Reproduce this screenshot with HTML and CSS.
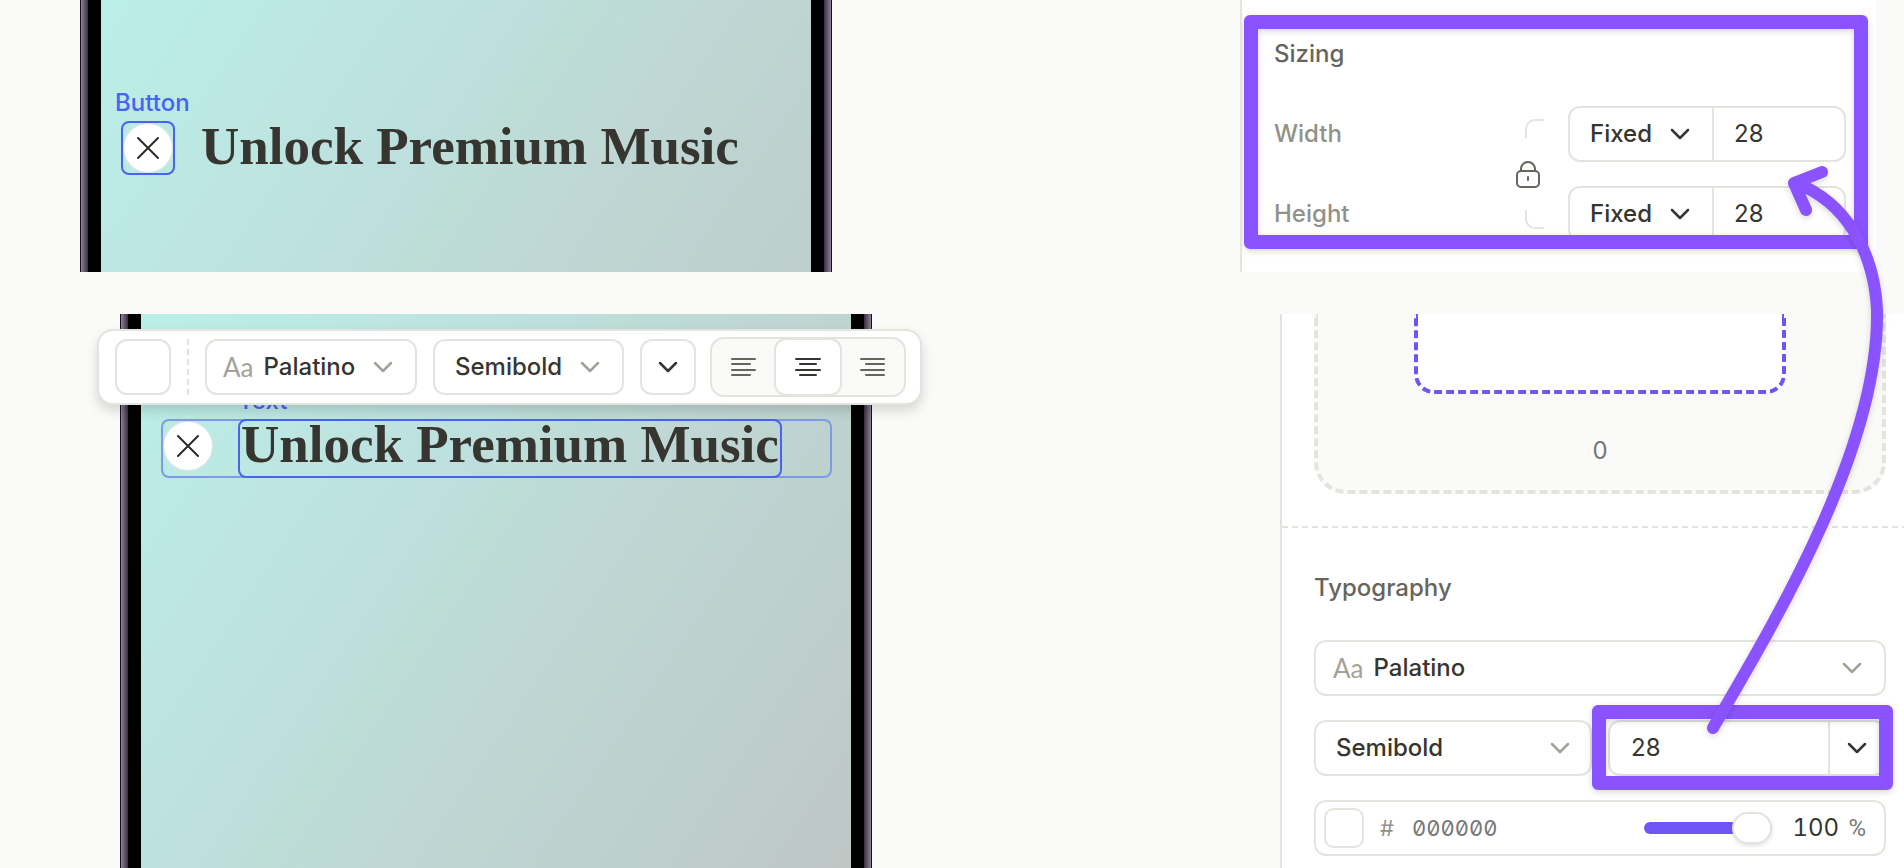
FILE: index.html
```html
<!DOCTYPE html>
<html lang="en">
<head>
<meta charset="utf-8">
<meta name="viewport" content="width=device-width, initial-scale=1">
<title>Matching button size to text size</title>
<link rel="stylesheet" href="styles.css">
</head>
<body>
<svg class="symbols" aria-hidden="true">
  <symbol id="chevron" viewBox="0 0 20 12"><path d="M2 2l8 8 8-8"/></symbol>
  <symbol id="cross" viewBox="0 0 24 24"><path d="M2 2l20 20M22 2L2 22"/></symbol>
</svg>
<main class="page">
  <section class="shot shot-top">
    <div class="phone">
      <div class="screen">
        <div class="title-row">
          <div class="selected-button">
            <span class="tag tag-button">Button</span>
            <button class="close" type="button" aria-label="Close"><svg class="cross"><use href="#cross"/></svg></button>
          </div>
          <h2 class="title">Unlock Premium Music</h2>
        </div>
      </div>
    </div>
    <aside class="panel panel-sizing">
      <h3 class="panel-title">Sizing</h3>
      <div class="sizing">
        <label class="name" for="width">Width</label>
        <button class="lock" type="button" aria-label="Lock proportions">
          <svg width="28" height="136" viewBox="0 0 28 136">
            <path class="bracket" d="M28 14h-9a9 9 0 0 0-9 9v9M10 104v9a9 9 0 0 0 9 9h9"/>
            <rect x="1" y="65" width="22" height="16" rx="4"/>
            <path d="M5 65v-2a7 7 0 0 1 14 0v2M12 71v3"/>
          </svg>
        </button>
        <div class="field split">
          <select class="mode" aria-label="Width mode"><option>Fixed</option></select>
          <svg class="chevron dark"><use href="#chevron"/></svg>
          <input class="size" id="width" type="text" value="28">
        </div>
        <label class="name" for="height">Height</label>
        <div class="field split">
          <select class="mode" aria-label="Height mode"><option>Fixed</option></select>
          <svg class="chevron dark"><use href="#chevron"/></svg>
          <input class="size" id="height" type="text" value="28">
        </div>
      </div>
      <div class="frame frame-sizing"></div>
    </aside>
  </section>

  <section class="shot shot-bottom">
    <div class="phone">
      <div class="screen">
        <div class="title-row outlined">
          <button class="close" type="button" aria-label="Close"><svg class="cross"><use href="#cross"/></svg></button>
          <div class="selected-text">
            <span class="tag tag-text">Text</span>
            <h2 class="title">Unlock Premium Music</h2>
          </div>
        </div>
      </div>
      <div class="toolbar" role="toolbar" aria-label="Text formatting">
        <button class="swatch-large" type="button" aria-label="Text color"></button>
        <span class="rule"></span>
        <div class="field tool-font">
          <span class="aa" aria-hidden="true">Aa</span>
          <select aria-label="Font"><option>Palatino</option></select>
          <svg class="chevron"><use href="#chevron"/></svg>
        </div>
        <div class="field tool-weight">
          <select aria-label="Weight"><option>Semibold</option></select>
          <svg class="chevron"><use href="#chevron"/></svg>
        </div>
        <button class="more" type="button" aria-label="More"><svg class="chevron dark"><use href="#chevron"/></svg></button>
        <div class="aligns" role="group" aria-label="Alignment">
          <button type="button" aria-label="Align left"><svg class="lines" viewBox="0 0 28 22"><path d="M3 3h23M3 8h18M3 14h23M3 19h18"/></svg></button>
          <button class="on" type="button" aria-label="Align center" aria-pressed="true"><svg class="lines" viewBox="0 0 28 22"><path d="M2 3h24M6 8h16M2 14h24M6 19h16"/></svg></button>
          <button type="button" aria-label="Align right"><svg class="lines" viewBox="0 0 28 22"><path d="M2 3h23M7 8h18M2 14h23M7 19h18"/></svg></button>
        </div>
      </div>
    </div>
    <aside class="panel panel-type">
      <div class="spacing">
        <div class="spacing-inner"></div>
        <span class="spacing-value">0</span>
      </div>
      <div class="divider"></div>
      <h3 class="panel-title">Typography</h3>
      <div class="fields">
        <div class="field field-font">
          <span class="aa" aria-hidden="true">Aa</span>
          <select aria-label="Font family"><option>Palatino</option></select>
          <svg class="chevron"><use href="#chevron"/></svg>
        </div>
        <div class="pair">
          <div class="field field-weight">
            <select aria-label="Font weight"><option>Semibold</option></select>
            <svg class="chevron"><use href="#chevron"/></svg>
          </div>
          <div class="combo">
            <div class="field">
              <input class="font-size" type="text" value="28" aria-label="Font size">
              <button class="open" type="button" aria-label="Choose font size"><svg class="chevron dark"><use href="#chevron"/></svg></button>
            </div>
            <div class="frame frame-font"></div>
          </div>
        </div>
        <div class="field field-color">
          <button class="swatch" type="button" aria-label="Pick color"></button>
          <label class="hash" for="hex">#</label>
          <input class="hex" id="hex" type="text" placeholder="000000">
          <input class="opacity" type="range" min="0" max="100" value="100" aria-label="Opacity">
          <input class="percent" id="opacity-value" type="text" value="100">
          <label class="unit" for="opacity-value">%</label>
        </div>
      </div>
    </aside>
  </section>

  <svg class="arrow" width="204" height="600" viewBox="1700 150 204 600" aria-hidden="true">
    <path d="M1713 728C1770 630 1880 450 1877 310C1874 250 1845 202 1796 183M1822 172L1794 183L1806 210"/>
  </svg>
</main>
</body>
</html>
```
FILE: styles.css
```css
:root {
  --bg: #fafaf8;
  --line: #e4e4de;
  --ink: #36352f;
  --muted: #a3a299;
  --blue: #4762f5;
  --violet: #7057f5;
  --mark: #8b53ff;
}

* { box-sizing: border-box; }

body {
  margin: 0;
  background: var(--bg);
  color: var(--ink);
  font: 24px/32px Inter, "Liberation Sans", sans-serif;
}

button, input, select {
  margin: 0;
  padding: 0;
  border: 0;
  background: transparent;
  color: inherit;
  font: inherit;
  min-width: 0;
}

select { appearance: none; flex: 1; font-weight: 500; }
h2, h3 { margin: 0; }

.symbols { position: absolute; width: 0; height: 0; }

.page {
  position: relative;
  display: flex;
  flex-direction: column;
  gap: 42px;
  min-height: 100vh;
  overflow: hidden;
}

.shot { display: flex; justify-content: space-between; }
.shot-top { height: 272px; padding: 0 28px 0 80px; }
.shot-bottom { flex: 1; padding-left: 120px; }

/* Phones */
.phone {
  position: relative;
  flex: 0 1 752px;
  display: flex;
  padding: 0 21px;
  background:
    linear-gradient(90deg, #15121c 1px, #8b8296 1px, #5c5268 5px, #37303f 8px, transparent 8px),
    linear-gradient(270deg, #15121c 1px, #8b8296 1px, #5c5268 5px, #37303f 8px, transparent 8px),
    #000;
}

.screen {
  flex: 1;
  min-width: 0;
  background: linear-gradient(124deg, #baefe8 0, #bde6e1 200px, #bddfde 350px, #bdddd7 400px, #bfd8d5 500px, #bdcfcd 720px, #bfc6c4 910px);
}

.shot-top .screen { padding: 121px 19px 0; }
.shot-bottom .screen { padding: 105px 19px 0 20px; }

.title-row { display: flex; align-items: flex-start; gap: 26px; }
.title-row.outlined {
  border-radius: 8px;
  box-shadow: inset 0 0 0 2px #819ae8;
  padding-left: 3px;
}
.outlined .close { margin-top: 3px; }

.title {
  padding: 2px 0 11px;
  font: 700 53px/46px "Liberation Serif", serif;
  white-space: nowrap;
}

.selected-button, .selected-text {
  position: relative;
  border: 2px solid var(--blue);
  border-radius: 8px;
}
.shot-top .title-row { padding-left: 1px; }
.selected-button { padding: 1px; }
.selected-text { padding: 0 1px; }
.selected-text .title { padding: 0 0 9px; }

.tag { position: absolute; bottom: 100%; margin-bottom: 4px; color: var(--blue); font-weight: 500; }
.tag-button { left: -8px; }
.tag-text { left: -2px; }

.close {
  display: grid;
  place-items: center;
  width: 48px;
  height: 48px;
  border-radius: 50%;
  background: #fff;
  box-shadow: 0 0 0 1px #dfe5e2;
}
.cross { width: 24px; height: 24px; fill: none; stroke: #2b2b27; stroke-width: 2; stroke-linecap: round; }

/* Fields */
.field {
  display: flex;
  align-items: center;
  height: 56px;
  border: 2px solid var(--line);
  border-radius: 12px;
  background: #fff;
}
.chevron {
  flex: none;
  width: 20px;
  height: 12px;
  fill: none;
  stroke: var(--muted);
  stroke-width: 2.500;
  stroke-linecap: round;
  stroke-linejoin: round;
  pointer-events: none;
}
.chevron.dark { stroke: var(--ink); }
.aa { margin-right: 10px; color: var(--muted); font: 26px/32px Lato, sans-serif; }

/* Toolbar */
.toolbar {
  position: absolute;
  top: 15px;
  left: -23px;
  display: flex;
  align-items: center;
  gap: 16px;
  height: 76px;
  padding: 0 14px 0 16px;
  border: 2px solid var(--line);
  border-radius: 16px;
  background: #fff;
  box-shadow: 0 6px 12px rgb(0 0 0 / 14%);
}
.swatch-large, .more {
  width: 56px;
  height: 56px;
  border: 2px solid var(--line);
  border-radius: 12px;
}
.more { display: grid; place-items: center; }
.rule {
  width: 2px;
  height: 56px;
  background: repeating-linear-gradient(var(--line) 0 6px, transparent 6px 10px);
}
.tool-font { width: 212px; padding: 0 22px 0 16px; }
.tool-weight { width: 191px; padding: 0 22px 0 20px; }

.aligns {
  display: flex;
  width: 196px;
  height: 60px;
  margin-left: -2px;
  border: 2px solid var(--line);
  border-radius: 14px;
  background: var(--bg);
}
.aligns button { flex: 1; display: grid; place-items: center; color: #66655d; }
.aligns .on {
  flex: 0 0 68px;
  margin: -1px 0;
  border: 2px solid var(--line);
  border-radius: 12px;
  background: #fff;
  color: var(--ink);
}
.lines { width: 28px; height: 22px; fill: none; stroke: currentColor; stroke-width: 2; stroke-linecap: round; }

/* Panels */
.panel { position: relative; min-width: 0; border-left: 2px solid var(--line); background: #fff; }
.panel-sizing { flex: 0 0 636px; padding: 38px 30px 0 32px; overflow: hidden; }
.panel-type { flex: 0 0 624px; padding: 0 18px 12px 32px; }
.panel-title { margin-bottom: 36px; color: #66655d; font: 500 24px/32px Inter, sans-serif; }

.sizing {
  display: grid;
  grid-template-columns: 1fr 28px 278px;
  gap: 24px;
  align-items: center;
}
.name { color: #929188; font-weight: 500; }
.lock { grid-column: 2; grid-row: 1 / 3; height: 136px; }
.lock svg { display: block; fill: none; stroke: #66655d; stroke-width: 2; stroke-linecap: round; }
.lock .bracket { stroke: var(--line); stroke-linecap: butt; }
.split { grid-column: 3; padding-left: 20px; }
.mode { flex: 0 0 80px; }
.size {
  flex: 1;
  align-self: stretch;
  margin-left: 22px;
  padding-left: 20px;
  border-left: 2px solid var(--line);
}

.spacing {
  display: flex;
  flex-direction: column;
  align-items: center;
  height: 180px;
  border: 4px dashed var(--line);
  border-top: 0;
  border-radius: 0 0 32px 32px;
  background: var(--bg);
}
.spacing-inner {
  width: 66%;
  height: 80px;
  border: 4px dashed var(--violet);
  border-top: 0;
  border-radius: 0 0 20px 20px;
  background: #fff;
}
.spacing-value { margin-top: 41px; color: #777; }

.divider {
  height: 2px;
  margin: 32px -18px 44px -32px;
  background: repeating-linear-gradient(90deg, var(--line) 0 6px, transparent 6px 10px);
}

.fields { display: grid; grid-template-columns: minmax(0, 1fr); gap: 24px; }
.field-font { padding: 0 22px 0 17px; }
.pair { display: grid; grid-template-columns: repeat(2, minmax(0, 1fr)); gap: 16px; }
.field-weight { padding: 0 20px; }
.combo { position: relative; }
.combo .field { padding-left: 21px; }
.font-size { flex: 1; }
.open {
  display: grid;
  place-items: center;
  align-self: stretch;
  flex: 0 0 56px;
  border-left: 2px solid var(--line);
}

.field-color { padding: 0 18px 0 8px; }
.swatch { flex: none; width: 40px; height: 40px; border: 2px solid var(--line); border-radius: 10px; }
.hash { flex: 0 0 32px; margin-left: 16px; color: #929188; font-size: 22px; }
.hex { flex: 1; font-size: 22px; font-variant-numeric: slashed-zero tabular-nums; }
.hex::placeholder { color: #777; opacity: 1; }
.percent { flex: 0 0 56px; margin-left: 20px; font-variant-numeric: tabular-nums; }
.unit { color: #777; font-family: Roboto, sans-serif; }

.opacity { appearance: none; flex: 0 0 128px; height: 32px; }
.opacity::-webkit-slider-runnable-track {
  height: 12px;
  border-radius: 6px;
  background: var(--violet);
}
.opacity::-webkit-slider-thumb {
  appearance: none;
  width: 40px;
  height: 32px;
  margin-top: -10px;
  border: 2px solid var(--line);
  border-radius: 16px;
  background: #fff;
  box-shadow: 0 2px 4px rgb(0 0 0 / 12%);
}

/* Callouts */
.frame {
  position: absolute;
  border: 14px solid var(--mark);
  border-radius: 6px;
  filter: drop-shadow(0 2px 3px rgb(0 0 0 / 16%));
  pointer-events: none;
}
.frame-sizing { inset: 15px 8px 23px 2px; }
.frame-font { inset: -15px -7px -14px -16px; }

.arrow {
  position: absolute;
  top: 150px;
  right: 0;
  fill: none;
  stroke: var(--mark);
  stroke-width: 12;
  stroke-linecap: round;
  stroke-linejoin: round;
  filter: drop-shadow(0 2px 3px rgb(0 0 0 / 16%));
  pointer-events: none;
}
```
